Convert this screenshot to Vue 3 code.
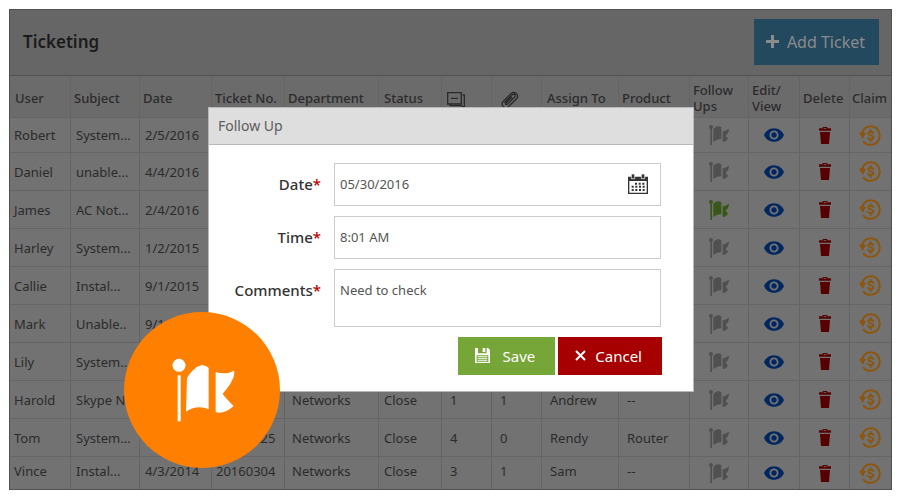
<script setup>
import { ref } from 'vue'

const columns = [
  { key: 'user', label: 'User', width: 61 },
  { key: 'subject', label: 'Subject', width: 69 },
  { key: 'date', label: 'Date', width: 72 },
  { key: 'ticket', label: 'Ticket No.', width: 73 },
  { key: 'department', label: 'Department', width: 94 },
  { key: 'status', label: 'Status', width: 63 },
  { key: 'comments', icon: 'comments', width: 50 },
  { key: 'files', icon: 'clip', width: 50 },
  { key: 'assign', label: 'Assign To', width: 77 },
  { key: 'product', label: 'Product', width: 71 },
  { key: 'follow', label: 'Follow Ups', width: 59 },
  { key: 'edit', label: 'Edit/ View', width: 51 },
  { key: 'remove', label: 'Delete', width: 50 },
  { key: 'claim', label: 'Claim', width: 41 }
]
const total = columns.reduce((sum, c) => sum + c.width, 0)
const textKeys = columns.slice(0, 10).map(c => c.key)

const rows = [
  { user: 'Robert', subject: 'System...', date: '2/5/2016' },
  { user: 'Daniel', subject: 'unable...', date: '4/4/2016' },
  { user: 'James', subject: 'AC Not...', date: '2/4/2016', active: true },
  { user: 'Harley', subject: 'System...', date: '1/2/2015' },
  { user: 'Callie', subject: 'Instal...', date: '9/1/2015' },
  { user: 'Mark', subject: 'Unable..', date: '9/11/2015' },
  { user: 'Lily', subject: 'System...' },
  { user: 'Harold', subject: 'Skype N', department: 'Networks', status: 'Close', comments: '1', files: '1', assign: 'Andrew', product: '--' },
  { user: 'Tom', subject: 'System...', ticket: '20160225', department: 'Networks', status: 'Close', comments: '4', files: '0', assign: 'Rendy', product: 'Router' },
  { user: 'Vince', subject: 'Instal...', date: '4/3/2014', ticket: '20160304', department: 'Networks', status: 'Close', comments: '3', files: '1', assign: 'Sam', product: '--' }
]

const date = ref('05/30/2016')
const time = ref('8:01 AM')
const comments = ref('Need to check')
</script>

<template>
  <div class="page">
    <svg class="defs" aria-hidden="true">
      <symbol id="flag" viewBox="35 38 190 192">
        <circle cx="55" cy="60" r="19.5" />
        <path d="M51 90H60V228H51Z" />
        <path d="M79 98C96 70 122 46 144 68V192C122 182 98 184 76 199Z" />
        <path d="M165 80C185 87 205 84 220 76C226 92 205 125 186 145C196 160 208 170 219 182C205 195 185 206 165 201Z" />
      </symbol>
      <symbol id="small-flag" viewBox="0 0 60 60">
        <circle cx="6" cy="6" r="6" />
        <path d="M4 10H9V60H4Z" />
        <path d="M13 13C19 5 28 1 37 7V43C29 41 21 45 13 51Z" />
        <path d="M41 19C49 19 54 13 60 11C60 22 54 28 50 32L57 41C53 48 46 51 41 51Z" />
      </symbol>
      <symbol id="eye" viewBox="1 4.500 22 15">
        <path d="M12 4.500C7 4.500 2.730 7.610 1 12c1.730 4.390 6 7.500 11 7.500s9.270-3.110 11-7.500c-1.730-4.390-6-7.500-11-7.500zM12 17c-2.760 0-5-2.240-5-5s2.240-5 5-5 5 2.240 5 5-2.240 5-5 5zm0-8c-1.660 0-3 1.340-3 3s1.340 3 3 3 3-1.340 3-3-1.340-3-3-3z" />
      </symbol>
      <symbol id="trash" viewBox="0 0 36 51">
        <path d="M11 0H25V4H36V11H0V4H11ZM14 3V5H22V3ZM3 15H33L30 51H6Z" />
      </symbol>
      <symbol id="claim" viewBox="0 0 66 64">
        <path d="M9 25C13 11 22 3.500 35 3.500C51 3.500 62.500 15 62.500 32C62.500 49 51 60.500 35 60.500C25 60.500 17 56 12 49" fill="none" stroke="currentColor" stroke-width="6" />
        <path d="M0 25L10 20L20 25L11 43Z" />
        <path d="M43 26C42 19 28 19 28 26C28 33 43 30 43 38C43 45 28 45 27 37" fill="none" stroke="currentColor" stroke-width="6" />
        <path d="M32 13H38V22H32ZM32 42H38V51H32Z" />
      </symbol>
    </svg>

    <main class="panel">
      <header class="bar">
        <h1>Ticketing</h1>
        <button class="add" type="button">
          <svg viewBox="0 0 13 13" width="13" height="13"><path d="M5 0H8V5H13V8H8V13H5V8H0V5H5Z" /></svg>
          Add Ticket
        </button>
      </header>

      <table>
        <colgroup>
          <col v-for="c in columns" :key="c.key" :style="{ width: (c.width / total) * 100 + '%' }">
        </colgroup>
        <thead>
          <tr>
            <th v-for="c in columns" :key="c.key" :class="c.key">
              <svg v-if="c.icon === 'comments'" viewBox="0 0 54 48" width="18" height="16">
                <path d="M2 2H43V36H2ZM47 9H52V46L43 41H9V36M12 19H33" fill="none" stroke="currentColor" stroke-width="4" />
              </svg>
              <svg v-else-if="c.icon === 'clip'" viewBox="0 0 54 54" width="18" height="18">
                <path d="M10 35L34 11C39 6 46 12 41 18L19 40C16 43 12 39 15 36L33 18M31 7L7 31C-3 42 11 57 22 47L46 24C50 20 52 14 47 9C42 3 35 3 31 7Z" fill="none" stroke="currentColor" stroke-width="4" />
              </svg>
              <template v-else>{{ c.label }}</template>
            </th>
          </tr>
        </thead>
        <tbody>
          <tr v-for="r in rows" :key="r.user">
            <td v-for="k in textKeys" :key="k" :class="k">{{ r[k] }}</td>
            <td class="action">
              <button type="button" class="flag" :class="{ active: r.active }" aria-label="Follow up"><svg width="20" height="20"><use href="#small-flag" /></svg></button>
            </td>
            <td class="action">
              <button type="button" class="eye" aria-label="Edit or view"><svg width="20" height="14"><use href="#eye" /></svg></button>
            </td>
            <td class="action">
              <button type="button" class="trash" aria-label="Delete"><svg width="12" height="17"><use href="#trash" /></svg></button>
            </td>
            <td class="action">
              <button type="button" class="refund" aria-label="Claim"><svg width="22" height="21"><use href="#claim" /></svg></button>
            </td>
          </tr>
        </tbody>
      </table>
    </main>

    <div class="overlay">
      <section class="dialog" role="dialog" aria-labelledby="dialog-title">
        <h2 id="dialog-title">Follow Up</h2>
        <form @submit.prevent>
          <label for="date">Date<b>*</b></label>
          <div class="field">
            <input id="date" v-model="date" type="text">
            <button class="calendar" type="button" aria-label="Pick a date">
              <svg viewBox="0 0 60 60" width="20" height="20">
                <path d="M0 8H60V60H0ZM4 21V56H56V21Z" fill-rule="evenodd" />
                <path d="M10 0H20V14H10ZM40 0H50V14H40Z" stroke="#fff" stroke-width="2" />
                <path d="M21 29H50M11 38H50M11 48H50" stroke="#333" stroke-width="6" stroke-dasharray="6 5" fill="none" />
              </svg>
            </button>
          </div>
          <label for="time">Time<b>*</b></label>
          <div class="field"><input id="time" v-model="time" type="text"></div>
          <label for="comments">Comments<b>*</b></label>
          <div class="field tall"><textarea id="comments" v-model="comments"></textarea></div>
          <div class="buttons">
            <button class="save" type="submit">
              <svg viewBox="0 0 45 45" width="15" height="15">
                <path d="M0 0H9V16H35V0H39L45 6V45H0ZM5 22V42H40V22Z" fill-rule="evenodd" />
                <path d="M23 0H31V12H23ZM8 25H37V28H8ZM8 31H37V34H8ZM8 37H37V40H8Z" />
              </svg>
              Save
            </button>
            <button class="cancel" type="button">
              <svg viewBox="0 0 11 11" width="11" height="11"><path d="M1 1L10 10M10 1L1 10" fill="none" stroke="currentColor" stroke-width="2" /></svg>
              Cancel
            </button>
          </div>
        </form>
        <div class="badge"><svg width="64" height="64"><use href="#flag" /></svg></div>
      </section>
    </div>
  </div>
</template>

<style>
body {
  background: #fff;
}
</style>

<style scoped>
.page {
  position: relative;
  padding: 9px 8px 10px 9px;
  font-family: "Noto Sans", "Open Sans", sans-serif;
  font-size: 14px;
  line-height: 16px;
  color: #2b2b2b;
}
.page * {
  box-sizing: border-box;
}
.defs {
  position: absolute;
  width: 0;
  height: 0;
}
svg {
  display: block;
  fill: currentColor;
}
button {
  font: inherit;
  border: 0;
  padding: 0;
  margin: 0;
  background: none;
  cursor: pointer;
}
.panel {
  border: 1px solid #515151;
  background: #727272;
}
.bar {
  display: flex;
  align-items: center;
  justify-content: space-between;
  height: 66px;
  padding: 0 12px 2px 13px;
  background: #666;
  border-bottom: 1px solid #515151;
}
h1 {
  margin: 0;
  font-size: 17px;
  font-weight: 600;
  color: #1b1b1b;
}
.add {
  display: flex;
  align-items: center;
  gap: 8px;
  height: 46px;
  padding: 0 14px 0 12px;
  background: #23495f;
  color: #8b8b8b;
  font-size: 16px;
}
table {
  width: 100%;
  table-layout: fixed;
  border-collapse: separate;
  border-spacing: 0;
}
th,
td {
  border-right: 1px solid #656565;
  border-bottom: 1px solid #656565;
  text-align: left;
  vertical-align: middle;
  white-space: nowrap;
}
th:last-child,
td:last-child {
  border-right: 0;
}
th {
  height: 42px;
  padding: 3px 0 0 3px;
  background: #6b6b6b;
  font-size: 13px;
  font-weight: 500;
}
th.user,
th.status,
th.comments,
th.assign {
  padding-left: 5px;
}
th.files {
  padding-left: 9px;
}
th.claim {
  padding-left: 2px;
}
th.comments,
th.files {
  padding-top: 6px;
}
th.follow,
th.edit {
  padding-top: 2px;
  white-space: normal;
}
td {
  height: 38px;
  padding: 0 0 0 5px;
  font-size: 13px;
}
td.user {
  padding-left: 4px;
}
td.ticket {
  padding-left: 4px;
}
td.department {
  padding-left: 7px;
}
td.comments,
td.files,
td.assign,
td.product {
  padding-left: 8px;
}
tbody tr:first-child td {
  height: 35px;
}
tbody tr:last-child td {
  height: 32px;
  padding-bottom: 4px;
  border-bottom: 0;
}
tbody tr td.action {
  padding: 0;
}
.action button {
  display: block;
  margin: 0 auto;
}
.flag {
  color: #505050;
}
.flag.active {
  color: #385817;
}
.eye {
  color: #00275f;
}
.trash {
  color: #560000;
}
.action .refund {
  margin-left: 9px;
  color: #8d560c;
}
.overlay {
  position: absolute;
  inset: 0;
  display: flex;
  align-items: center;
  justify-content: center;
  padding: 0 0 2px 2px;
}
.dialog {
  position: relative;
  width: min(486px, 90%);
  border: 1px solid #b9b9b9;
  background: #fff;
}
h2 {
  margin: 0;
  padding: 10px 9px;
  background: #dedede;
  border-bottom: 1px solid #b9b9b9;
  font-size: 14px;
  font-weight: 400;
  color: #5c5c5c;
}
form {
  display: grid;
  grid-template-columns: 112px 1fr;
  gap: 10px 13px;
  padding: 18px 32px 16px 0;
}
label {
  padding-top: 13px;
  text-align: right;
  font-size: 15px;
  font-weight: 500;
  color: #333;
}
label b {
  color: #b00;
  font-weight: 500;
}
.field {
  display: flex;
  align-items: center;
  height: 43px;
  border: 1px solid #ccc;
}
.field.tall {
  height: 58px;
}
input,
textarea {
  flex: 1;
  min-width: 0;
  height: 100%;
  margin: 0;
  padding: 0 5px;
  border: 0;
  outline: 0;
  resize: none;
  background: none;
  font: inherit;
  font-size: 13px;
  color: #555;
}
textarea {
  padding-top: 12px;
}
.calendar {
  margin-right: 12px;
  color: #333;
}
.buttons {
  grid-column: 1 / -1;
  display: flex;
  justify-content: flex-end;
  gap: 3px;
  margin-right: -1px;
}
.save,
.cancel {
  display: flex;
  align-items: center;
  height: 38px;
  padding: 0 20px 0 17px;
  color: #fff;
  font-size: 15px;
}
.save {
  gap: 13px;
  background: #76a538;
}
.cancel {
  gap: 9px;
  background: #a60000;
}
.badge {
  position: absolute;
  left: -85px;
  bottom: -77px;
  display: flex;
  align-items: center;
  justify-content: center;
  width: 156px;
  height: 156px;
  padding-left: 3px;
  border-radius: 50%;
  background: #ff8000;
  color: #fff;
}
</style>
